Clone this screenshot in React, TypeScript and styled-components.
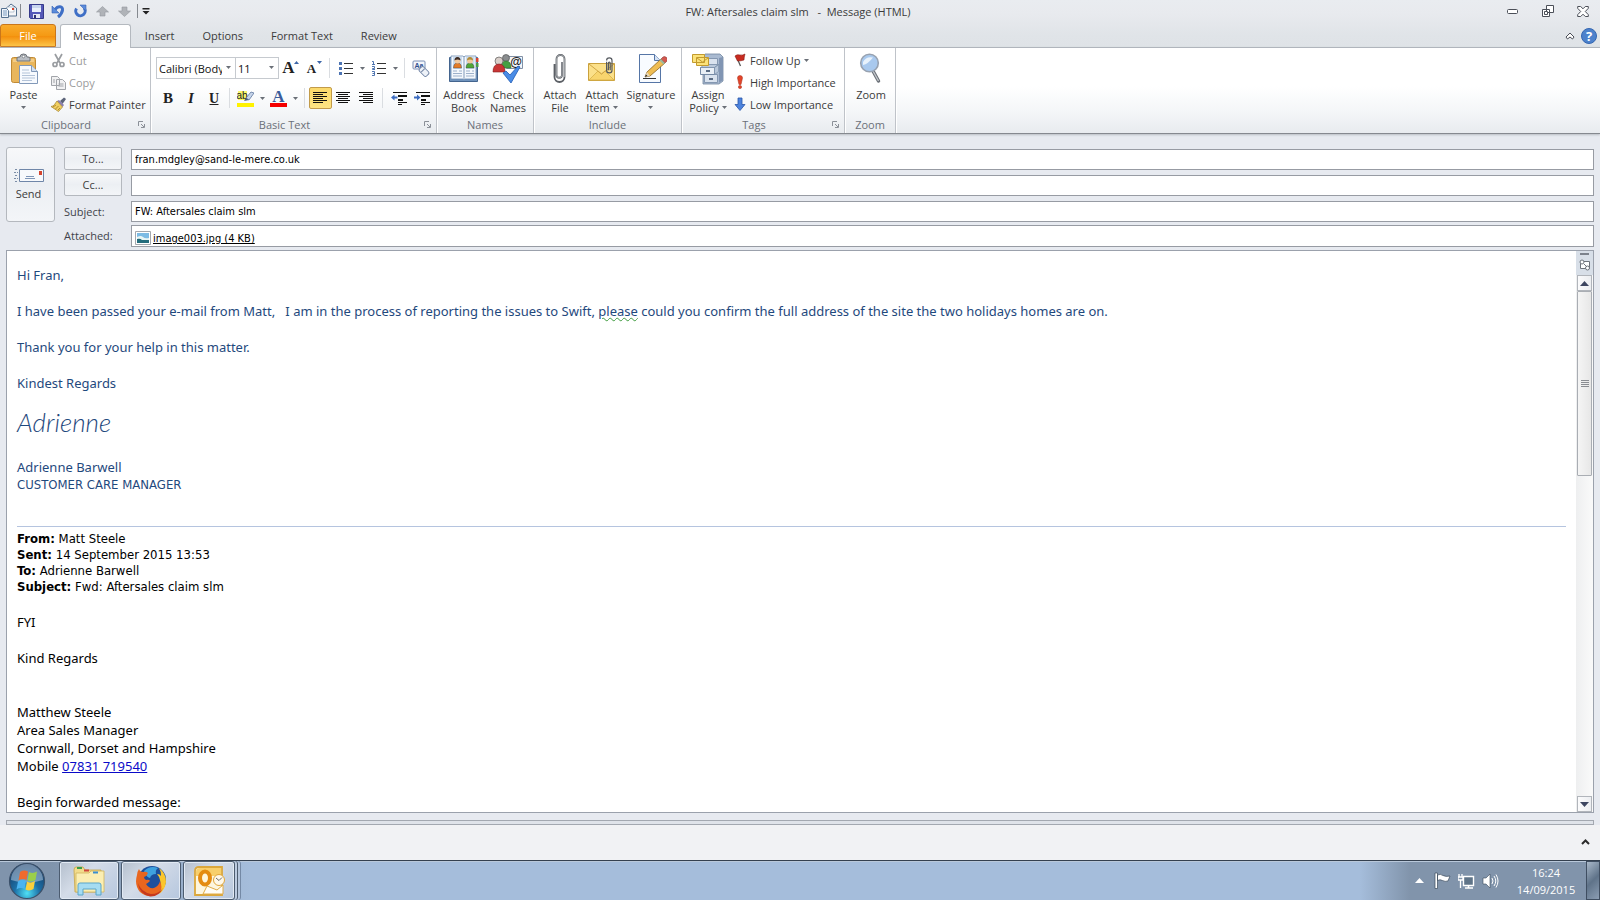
import React from 'react';
import styled, { createGlobalStyle, css } from 'styled-components';

const ui = '"Open Sans", "Noto Sans", sans-serif';
const dialog = '"DejaVu Sans Condensed", "Liberation Sans", sans-serif';

const GlobalStyle = createGlobalStyle`
  *, *::before, *::after { box-sizing: border-box; }
  body { margin: 0; background: #e7eaf0; font: 11px/13px ${ui}; color: #3b3b3b; }
  button, input, select { font: inherit; color: inherit; }
  svg { display: block; flex: none; }
  p { margin: 0; }
`;

const Window = styled.div`
  display: flex;
  flex-direction: column;
  min-height: 100vh;
`;

/* ---------- title bar ---------- */
const Chrome = styled.header`
  background: linear-gradient(#e9ecf0, #e8eaee 30%, #e0e4e8 75%, #dfe3e7);
`;
const TitleBar = styled.div`
  display: grid;
  grid-template-columns: 1fr auto 1fr;
  align-items: center;
  height: 24px;
  padding-bottom: 2px;
`;
const QuickAccess = styled.div`
  display: flex;
  align-items: center;
`;
const BareButton = styled.button`
  display: flex;
  align-items: center;
  justify-content: center;
  padding: 0;
  border: 0;
  background: none;
`;
const QuickButton = styled(BareButton)`
  width: 22px;
  height: 22px;
`;
const QuickDivider = styled.span<{ $gap: number }>`
  width: 1px;
  height: 14px;
  margin: 0 ${p => p.$gap}px 0 2px;
  background: #85898f;
`;
const Title = styled.h1`
  margin: 0;
  padding-right: 4px;
  font-size: 11px;
  font-weight: 400;
  white-space: pre;
`;
const WindowControls = styled.div`
  display: flex;
  justify-content: flex-end;
`;
const ControlButton = styled(BareButton)`
  width: 35px;
  height: 22px;
`;

/* ---------- tabs ---------- */
const TabRow = styled.nav`
  display: flex;
  height: 23px;
`;
const Tab = styled.button<{ $active?: boolean }>`
  height: 24px;
  padding: 0 13px 2px;
  border: 1px solid transparent;
  border-bottom: 0;
  border-radius: 3px 3px 0 0;
  background: none;
  white-space: nowrap;
  ${p => p.$active && css`
    position: relative;
    padding: 0 12px 2px;
    border-color: #b4b9bf;
    background: #fff;
  `}
`;
const FileTab = styled(Tab)`
  width: 56px;
  height: 23px;
  padding: 0;
  margin-right: 4px;
  border: 1px solid #c9761b;
  background: linear-gradient(#f9ab2c, #f59a14 50%, #f38d0a 52%, #fcc447);
  color: #fff;
`;
const TabTools = styled.div`
  display: flex;
  align-items: center;
  gap: 6px;
  margin-left: auto;
  padding-right: 3px;
`;

/* ---------- ribbon ---------- */
const Ribbon = styled.div`
  display: flex;
  height: 87px;
  border-top: 1px solid #b0b5bc;
  border-bottom: 1px solid #85898f;
  background: linear-gradient(#fff, #fff 45%, #f4f6f8 75%, #e8ebef);
  box-shadow: 0 1px 2px #b9bdc4;
`;
const Group = styled.section<{ $width: number }>`
  display: flex;
  flex-direction: column;
  flex: none;
  width: ${p => p.$width}px;
  border-right: 1px solid #bfc3c9;
  box-shadow: 1px 0 #fff;
`;
const GroupBody = styled.div<{ $inset: number }>`
  display: flex;
  flex: 1;
  padding-left: ${p => p.$inset}px;
`;
const GroupFooter = styled.div`
  display: flex;
  align-items: center;
  height: 17px;
  color: #6b7079;
  text-align: center;
`;
const GroupName = styled.h2`
  flex: 1;
  margin: 0;
  font-size: 11px;
  font-weight: 400;
`;
const LauncherButton = styled(BareButton)`
  width: 18px;
`;
const LargeButton = styled.button<{ $width: number }>`
  display: flex;
  flex-direction: column;
  align-items: center;
  flex: none;
  width: ${p => p.$width}px;
  padding: 5px 0 0;
  border: 0;
  background: none;
  white-space: nowrap;
`;
const LargeLabel = styled.span`
  margin-top: 3px;
`;
const LabelLine = styled.span`
  display: flex;
  align-items: center;
  justify-content: center;
  gap: 3px;
  height: 13px;
`;
const SmallColumn = styled.div`
  display: flex;
  flex-direction: column;
  padding: 2px 0 0 4px;
`;
const SmallButton = styled.button`
  display: flex;
  align-items: center;
  gap: 3px;
  height: 22px;
  padding: 0 0 2px;
  border: 0;
  background: none;
  white-space: nowrap;
  &:disabled { color: #9b9b9b; }
`;
const ToolRows = styled.div`
  display: flex;
  flex-direction: column;
  gap: 8px;
  padding-top: 9px;
`;
const ToolRow = styled.div`
  display: flex;
  align-items: center;
  height: 22px;
`;
const ToolButton = styled.button<{ $on?: boolean }>`
  display: flex;
  align-items: center;
  justify-content: center;
  width: 23px;
  height: 22px;
  padding: 0;
  border: 1px solid ${p => (p.$on ? '#c29b4a' : 'transparent')};
  border-radius: 2px;
  background: ${p => (p.$on ? 'linear-gradient(#fbd96b, #fde383)' : 'none')};
`;
const DropButton = styled(BareButton)`
  width: 10px;
  height: 22px;
`;
const ToolDivider = styled.span`
  width: 1px;
  height: 20px;
  margin: 0 4px;
  background: #dadde1;
`;
const Combo = styled.span<{ $width: number }>`
  position: relative;
  width: ${p => p.$width}px;
  height: 22px;
  border: 1px solid #c6cacf;
  background: #fff;
  & + & { border-left: 0; }
  > svg { position: absolute; right: 4px; top: 8px; pointer-events: none; }
`;
const ComboSelect = styled.select`
  appearance: none;
  width: calc(100% - 13px);
  height: 20px;
  padding: 0 0 0 2px;
  border: 0;
  background: none;
  color: #111;
  overflow: hidden;
  text-overflow: clip;
`;

/* ---------- message header ---------- */
const Envelope = styled.form`
  display: grid;
  grid-template-columns: 49px 1fr;
  gap: 9px;
  padding: 13px 6px 3px;
`;
const SendButton = styled.button`
  display: flex;
  flex-direction: column;
  align-items: center;
  justify-content: center;
  gap: 4px;
  height: 75px;
  padding: 0 4px 2px 0;
  border: 1px solid #b4b8be;
  border-radius: 3px;
  background: linear-gradient(#f7f8fa, #eceff3 50%, #f3f5f8);
`;
const Fields = styled.div`
  display: grid;
  grid-template-columns: 58px 1fr;
  grid-template-rows: 26px 26px 26px 22px;
  column-gap: 9px;
  align-items: start;
`;
const AddressButton = styled.button`
  height: 23px;
  border: 1px solid #b4b8be;
  border-radius: 2px;
  background: linear-gradient(#f7f8fa, #eceff3 50%, #f3f5f8);
`;
const FieldLabel = styled.label`
  align-self: center;
  padding-bottom: 2px;
  color: #3f434a;
`;
const boxed = css`
  width: 100%;
  border: 1px solid #979ba3;
  background: #fff;
  font-family: ${dialog};
  color: #000;
`;
const Field = styled.input`
  ${boxed}
  height: 21px;
  margin-top: 2px;
  padding: 0 3px;
`;
const AttachmentBox = styled.div`
  ${boxed}
  display: flex;
  align-items: flex-end;
  gap: 2px;
  height: 22px;
  padding: 0 3px 1px;
`;
const AttachmentLink = styled.a`
  color: #000;
`;

/* ---------- message body ---------- */
const Reading = styled.main`
  display: flex;
  flex: 1;
  margin: 0 6px;
  border: 1px solid #9ba1ac;
  background: #fff;
`;
const Letter = styled.article`
  flex: 1;
  padding: 15px 10px 0;
  font: 13px/18px "Noto Sans", sans-serif;
  color: #000;
`;
const Reply = styled.div`
  color: #1f497d;
`;
const Paragraph = styled.p`
  min-height: 18px;
  margin-bottom: 18px;
  white-space: pre-wrap;
`;
const Flagged = styled.span`
  text-decoration: underline wavy #3f9b3f 1px;
  text-underline-offset: 1px;
`;
const Signature = styled.p`
  margin-bottom: 24px;
  font: italic 300 26px/24px Lato, cursive;
`;
const JobTitle = styled.p`
  font: 13px/17px ${dialog};
`;
const Separator = styled.hr`
  height: 1px;
  margin: 33px 0 4px;
  border: 0;
  background: #b5c4df;
`;
const Origin = styled.div`
  margin-bottom: 18px;
  font: 13px/16px ${dialog};
`;
const ContactCard = styled.address`
  margin: 36px 0 18px;
  font-style: normal;
`;
const PhoneLink = styled.a`
  color: #0a0ac8;
`;
const ScrollRail = styled.div`
  display: flex;
  flex-direction: column;
  align-items: center;
  width: 17px;
  background: linear-gradient(90deg, #eeeff0, #fafafa);
`;
const SplitHandle = styled.div`
  display: flex;
  flex-direction: column;
  align-items: center;
  gap: 4px;
  width: 100%;
  height: 24px;
  padding-top: 2px;
  background: #d8dfe8;
`;
const ScrollButton = styled(BareButton)`
  width: 15px;
  height: 16px;
  border: 1px solid #b1b5bb;
  background: linear-gradient(90deg, #fbfbfc, #eceef1);
`;
const Thumb = styled.div`
  display: flex;
  align-items: center;
  justify-content: center;
  width: 15px;
  height: 185px;
  margin-bottom: auto;
  border: 1px solid #a9adb3;
  border-radius: 1px;
  background: linear-gradient(90deg, #f5f5f5, #e7e7e7);
`;
const Splitter = styled.div`
  height: 5px;
  margin: 7px 6px 0;
  border: 1px solid #a3a8b0;
  background: #dfe3e9;
`;
const PeoplePane = styled.footer`
  display: flex;
  align-items: center;
  justify-content: flex-end;
  height: 35px;
  padding: 0 4px 2px 0;
  background: #f1f2f4;
`;

/* ---------- taskbar ---------- */
const Taskbar = styled.nav`
  display: flex;
  height: 40px;
  border-top: 1px solid #34404f;
  background: linear-gradient(90deg, #8094ac 50px, #a5bddb 250px, #a5bddb calc(100% - 240px), #8194ab calc(100% - 190px));
  box-shadow: inset 0 1px #b9c8da;
`;
const StartButton = styled(BareButton)`
  width: 54px;
  margin-right: 5px;
`;
const TaskButton = styled.button<{ $stacked?: boolean }>`
  display: flex;
  align-items: center;
  justify-content: center;
  width: ${p => (p.$stacked ? 52 : 60)}px;
  margin-right: 2px;
  padding: 0;
  border: 1px solid #4c5c70;
  border-radius: 3px;
  background: linear-gradient(135deg, #b4bfcd, #d4dce8 40%, #b6c7de);
  box-shadow: inset 0 0 0 1px #e2eaf4${p => (p.$stacked ? ', 2px 0 #bccbe0, 3px 0 #4c5c70, 5px 0 #b5c6dd, 6px 0 #7489a5' : '')};
`;
const Tray = styled.div`
  display: flex;
  align-items: center;
  gap: 7px;
  margin-left: auto;
`;
const HiddenIconsButton = styled(BareButton)`
  width: 16px;
  height: 22px;
`;
const Clock = styled.time`
  width: 80px;
  color: #fff;
  line-height: 17px;
  text-align: center;
`;
const ShowDesktop = styled.button`
  align-self: stretch;
  width: 14px;
  margin-left: -7px;
  padding: 0;
  border: 1px solid #3f4e61;
  background: linear-gradient(135deg, #a9b8c9, #5f7389 50%, #8b9db3);
`;

/* ---------- drawings ---------- */
const Caret = ({ color = '#6a6f77' }: { color?: string }) => (
  <svg width="5" height="3" viewBox="0 0 5 3"><path d="M0 0h5L2.500 3z" fill={color} /></svg>
);
const Launcher = () => (
  <svg width="7" height="7" viewBox="0 0 7 7" fill="none" stroke="#8b9098">
    <path d="M.5 5V.5H5M3 3l3 3M6.500 3v3.500H3" />
  </svg>
);
const MailIcon = () => (
  <svg width="18" height="18" viewBox="0 0 18 18">
    <path d="M5.500 7 11 2l5.500 4v8h-11z" fill="#f4f6f9" stroke="#54708f" />
    <path d="M7 5h7v5H7z" fill="#fff" stroke="#9fb0c2" strokeWidth=".7" />
    <path d="M12 6h2v2h-2z" fill="#d3452f" />
    <path d="M1.500 6.500h5l2 2v7h-7z" fill="#eef4fb" stroke="#54708f" />
    <path d="M3 9h4M3 11h4M3 13h4" stroke="#7c9cc0" />
  </svg>
);
const SaveIcon = () => (
  <svg width="15" height="15" viewBox="0 0 15 15">
    <path d="M.5.5h14v14h-13l-1-1z" fill="#5559b8" stroke="#363a8a" />
    <path d="M3 1h9v7H3z" fill="#eaf0fb" /><path d="M3 1h9v3H3z" fill="#c9d6ef" />
    <path d="M4 10h7v4H4z" fill="#e7e9f3" /><path d="M5 11h2v3H5z" fill="#2e3170" />
  </svg>
);
const UndoIcon = () => (
  <svg width="15" height="15" viewBox="0 0 15 15">
    <path d="M4 5.500c3-4 8-3.500 7.500.5-.3 3-2 5-4.500 7" fill="none" stroke="#3f6fc6" strokeWidth="3" />
    <path d="M1 2v7h7z" fill="#5b8bdb" stroke="#3763b5" strokeWidth=".6" />
  </svg>
);
const RedoIcon = () => (
  <svg width="15" height="15" viewBox="0 0 15 15">
    <path d="M3.500 4.500a4.700 4.700 0 1 0 7.500-.5" fill="none" stroke="#3f6fc6" strokeWidth="3" />
    <path d="M7 1h6v6z" fill="#5b8bdb" stroke="#3763b5" strokeWidth=".6" />
  </svg>
);
const StepIcon = ({ down }: { down?: boolean }) => (
  <svg width="13" height="11" viewBox="0 0 13 11">
    <path d={down ? 'M4 1h5v4h3.500L6.500 10.500.5 5H4z' : 'M4 10h5V6h3.500L6.500.5.5 6H4z'} fill="#b0b3b8" stroke="#94989e" strokeWidth=".6" />
  </svg>
);
const CustomizeIcon = () => (
  <svg width="8" height="7" viewBox="0 0 8 7"><path d="M.5 0h7v1.500h-7zM.5 3h7L4 6.500z" fill="#222" /></svg>
);
const PasteIcon = () => (
  <svg width="32" height="32" viewBox="0 0 32 32">
    <rect x="3.500" y="4.500" width="24" height="25" rx="2" fill="#e9b65c" stroke="#c08a36" />
    <path d="M5 6h21v3H5z" fill="#f3cc86" />
    <path d="M9 8V5q0-1 2-1h1q0-3 3.500-3T19 4h1q2 0 2 1v3z" fill="#b9bdc3" stroke="#6d7278" />
    <circle cx="15.500" cy="3.500" r="1.300" fill="#fff" stroke="#6d7278" strokeWidth=".7" />
    <path d="M11.500 12.500h12l6 6v12h-18z" fill="#f7fafe" stroke="#8198b8" />
    <path d="M23.500 12.500v6h6" fill="#d4e1f2" stroke="#8198b8" />
    <path d="M14 17h7M14 20h8M14 22.500h13M14 25h13M14 27.500h10" stroke="#b3c3d8" />
  </svg>
);
const CutIcon = () => (
  <svg width="15" height="15" viewBox="0 0 15 15" fill="none" stroke="#9a9da1" strokeWidth="1.700">
    <path d="m4 1 5 9M11 1 6 10" /><circle cx="4" cy="11.500" r="2" /><circle cx="11" cy="11.500" r="2" />
  </svg>
);
const CopyIcon = () => (
  <svg width="15" height="15" viewBox="0 0 15 15" fill="#f1f1f2" stroke="#a1a4a9">
    <path d="M.5 1.500h6l2 2v7h-8zM5.500 4.500h6l3 3v7h-9z" />
    <path d="M2 5h2M2 7h2M7.500 9h5M7.500 11h5" />
  </svg>
);
const BrushIcon = () => (
  <svg width="15" height="15" viewBox="0 0 15 15">
    <path d="m9 4 4-3.500L15 2l-3.500 5z" fill="#5b6378" />
    <path d="m6 4 2-1 5 5-1.500 2z" fill="#8a7fb0" />
    <path d="m6 4 5.500 6-4 4.500L0 9.500c3 0 4-3 6-5.500z" fill="#f0cf62" stroke="#a98a35" strokeWidth=".8" />
    <path d="m2 10 3-2M4.500 12l3-3M7 13l2-2" stroke="#b38b2b" />
  </svg>
);
const Letterform = ({ text, size, style, hat, under }: { text: string; size: number; style?: string; hat?: string; under?: boolean }) => (
  <svg width="19" height="18" viewBox="0 0 19 18">
    <text x={hat ? 7.5 : 10} y="14" textAnchor="middle" fontFamily="Liberation Serif, serif" fontSize={size} fontWeight="700" fontStyle={style} fill="#222">{text}</text>
    {hat && <path d={hat} fill="#3c66a8" />}
    {under && <path d="M5.500 15.500h9" stroke="#222" />}
  </svg>
);
const ListIcon = ({ numbered }: { numbered?: boolean }) => (
  <svg width="15" height="15" viewBox="0 0 15 15">
    <path d="M6 2.500h9M6 7.500h9M6 12.500h9" stroke="#333" />
    {numbered
      ? <path d="M1 .5h1.500v3M1 3.500h3M1 5.500h2.500v2H1.500v1H4M1 10.500h2.500v4H1M1.500 12.500h2" stroke="#3c66a8" strokeWidth=".9" fill="none" />
      : <path d="M1 1h3v3H1zM1 6h3v3H1zM1 11h3v3H1z" fill="#4c73b3" />}
  </svg>
);
const ClearFormatIcon = () => (
  <svg width="18" height="17" viewBox="0 0 18 17">
    <rect x="1" y="1" width="12" height="8" rx="1" fill="#f3f6fb" stroke="#7a8fb5" />
    <text x="7" y="8" textAnchor="middle" fontFamily="Liberation Sans, sans-serif" fontSize="7" fontWeight="700" fill="#2d4f8f">Aa</text>
    <g transform="rotate(45 12 11.500)">
      <rect x="7" y="8.500" width="10" height="6" rx="2" fill="#eef2f8" stroke="#7486a6" />
      <path d="M10.500 9v5" stroke="#7486a6" />
    </g>
  </svg>
);
const HighlightIcon = () => (
  <svg width="17" height="17" viewBox="0 0 17 17">
    <path d="M1 1h9v9H1z" fill="#fbf66a" />
    <text x="5" y="9" textAnchor="middle" fontFamily="Liberation Sans, sans-serif" fontSize="10" fill="#222">ab</text>
    <path d="m9 8 5-6 3 1-5 7z" fill="#c7d5ea" stroke="#5e779f" strokeWidth=".8" /><path d="m7 11 2-3 3 2z" fill="#4a5d7c" />
    <path d="M0 13h17v4H0z" fill="#fff200" />
  </svg>
);
const FontColorIcon = () => (
  <svg width="17" height="17" viewBox="0 0 17 17">
    <text x="8.500" y="12" textAnchor="middle" fontFamily="Liberation Serif, serif" fontSize="17" fontWeight="700" fill="#3b5c9b">A</text>
    <path d="M0 13h17v4H0z" fill="#f50000" />
  </svg>
);
const AlignIcon = ({ kind }: { kind: 'left' | 'center' | 'right' }) => {
  const x = { left: 0, center: 2, right: 4 }[kind];
  return (
    <svg width="15" height="12" viewBox="0 0 15 12" stroke="#111" shapeRendering="crispEdges">
      <path d={`M0 .5h14M${x} 2.500h10M0 4.500h14M${x} 6.500h10M0 8.500h14M${x} 10.500h10`} />
    </svg>
  );
};
const IndentIcon = ({ right }: { right?: boolean }) => (
  <svg width="16" height="13" viewBox="0 0 16 13">
    <path d="M2 .5h14M7 10.500h9M7 12.500h4" stroke="#111" shapeRendering="crispEdges" />
    <path d="M7 3.500h9M7 7.500h5" stroke="#111" strokeWidth="2" shapeRendering="crispEdges" />
    <path d={right ? 'M6.500 5.500 3 2.500v2H0v2h3v2z' : 'M0 5.500l3.500-3v2h3v2h-3v2z'} fill="#3c6cc0" />
  </svg>
);
const Person = ({ x, y, hair, coat }: { x: number; y: number; hair: string; coat: string }) => (
  <g transform={`translate(${x} ${y})`}>
    <path d="M-4 10q0-5 4-5t4 5z" fill={coat} stroke="#333" strokeWidth=".4" />
    <circle r="3" cy="2.500" fill="#f0c9a0" /><path d="M-3 2.500a3 3.500 0 0 1 6 0q-3-2-6 0z" fill={hair} />
  </g>
);
const AddressBookIcon = () => (
  <svg width="32" height="32" viewBox="0 0 32 32">
    <path d="M1.500 4.500h28v24h-28z" fill="#6f93bd" stroke="#43648e" />
    <path d="M3 3h12l1 1 1-1h11v23H17l-1 1-1-1H3z" fill="#f4f8fd" stroke="#6d8bb0" strokeWidth=".8" />
    <path d="M5 4h9v12H5zM18 4h8.500v12H18z" fill="#c9dcf0" />
    <path d="M16 4v23" stroke="#8099b8" /><path d="M28 5h2.500v4H28z" fill="#d84532" /><path d="M28 10h2.500v4H28z" fill="#4c9c48" />
    <Person x={9.5} y={5} hair="#3b2a22" coat="#e47b26" /><Person x={22} y={5} hair="#b08b35" coat="#4fa637" />
    <path d="M5 18h4M11 18h3M5 20.500h9M5 23h9M18 18h4M24 18h2M18 20.500h8M18 23h8" stroke="#9db1cb" />
  </svg>
);
const CheckNamesIcon = () => (
  <svg width="32" height="32" viewBox="0 0 32 32">
    <path d="M14.500 3.500h16v12h-16z" fill="#f4f6fa" stroke="#8190a5" />
    <circle cx="14" cy="5" r="3.500" fill="#8a8d8f" stroke="#444" strokeWidth=".6" /><path d="M9 15q0-7 5-7t5 7z" fill="#45a043" stroke="#2b6f2b" strokeWidth=".6" />
    <circle cx="7" cy="8" r="4" fill="#d9cfca" stroke="#444" strokeWidth=".6" /><path d="M1 19q0-8 6-8t6 8z" fill="#c93535" stroke="#852020" strokeWidth=".6" />
    <text x="24" y="13" textAnchor="middle" fontFamily="Liberation Sans, sans-serif" fontSize="12" fontWeight="700" fill="#222">@</text>
    <path d="m11 20 3-2 4 4 8-9 2 1-9 16z" fill="#4a8ce6" stroke="#1f5bb5" strokeWidth=".8" />
  </svg>
);
const ClipPath = 'M11 8v14a4 4 0 0 0 9 0V6a4.500 4.500 0 0 0-9 0M14 22V10a1.500 1.500 0 0 1 3 0v12';
const ClipIcon = () => (
  <svg width="32" height="32" viewBox="0 0 32 32" fill="none">
    <g transform="translate(-1 -1)">
      <path d="M19 10v13a2.500 2.500 0 0 1-5.500 0V7a4 4 0 0 1 8 0v18a5 5 0 0 1-10 0V12" stroke="#5b5f65" strokeWidth="1.800" />
      <path d="M19 10v13a2.500 2.500 0 0 1-5.500 0V7a4 4 0 0 1 8 0v18" stroke="#d7dadd" strokeWidth=".5" />
    </g>
  </svg>
);
const AttachItemIcon = () => (
  <svg width="32" height="32" viewBox="0 0 32 32">
    <path d="M2.500 10.500h26v17h-26z" fill="#fbe08a" stroke="#caa13d" />
    <path d="m3 27 9-9 3.500 3 3.500-3 9 9z" fill="#f8d56e" stroke="#d8b149" strokeWidth=".8" /><path d="M3 11l12.500 10L28 11" fill="none" stroke="#d0a544" />
    <g transform="translate(14 4) scale(.6)" fill="none" stroke="#55595f" strokeWidth="2"><path d={ClipPath} /></g>
  </svg>
);
const SignatureIcon = () => (
  <svg width="32" height="32" viewBox="0 0 32 32">
    <path d="M4.500 1.500h15l6 6v22h-21z" fill="#f8fbff" stroke="#5575a6" /><path d="M19.500 1.500v6h6" fill="#d5e2f4" stroke="#5575a6" />
    <path d="M8 25.500h13" stroke="#333" />
    <path d="m10 24 2-5L26 6l4 4-15 13z" fill="#efbd53" stroke="#8d6420" strokeWidth=".8" />
    <path d="m26 6 2-2q1.500-1 3.500.5t.5 3.500l-2 2z" fill="#d25850" stroke="#8d3a35" strokeWidth=".6" /><path d="m24.500 7.500 4 4 1.500-1.500-4-4z" fill="#9eb79e" />
    <path d="m10 24 2-5 3 4z" fill="#e9d9b9" /><path d="m10 24 1-2.500 1.500 1.500z" fill="#222" />
  </svg>
);
const PolicyIcon = () => (
  <svg width="32" height="32" viewBox="0 0 32 32">
    <path d="M13 1h15l3 3v24l-4 3H11V4z" fill="#a9bad1" stroke="#71869f" strokeWidth=".8" />
    <path d="M27 5v25l4-3V4z" fill="#8195b3" />
    <path d="M12.500 5.500h13v6h-13zM12.500 21.500h13v8h-13z" fill="#d9e2ee" stroke="#8497b1" />
    <path d="M8.500 14.500h14v7h-14z" fill="#e9eff6" stroke="#7489a5" /><path d="m8.500 14.500 4-3h14l-4 3zM22.500 21.500l4-3v-7l-4 3z" fill="#b9c8db" stroke="#7489a5" strokeWidth=".6" />
    <path d="M14 18h4M17 26h4" stroke="#5b6d85" strokeWidth="2" />
    <path d="M.5 1.500h12v8H.5zM4.500 4.500h12v8h-12z" fill="#fbe27a" stroke="#c29a2e" /><path d="m5 5 5.500 4L16 5" fill="none" stroke="#c29a2e" />
  </svg>
);
const ZoomIcon = () => (
  <svg width="32" height="32" viewBox="0 0 32 32">
    <path d="m18 18 5.500 10" stroke="#6b7077" strokeWidth="3.500" strokeLinecap="round" /><path d="m18 18 5.500 10" stroke="#c5c9ce" strokeWidth="1.300" />
    <circle cx="14.500" cy="10" r="8.800" fill="#a9c9ee" stroke="#98a2b0" strokeWidth="1.600" />
    <path d="M8 9q3-6 10-4.500Q13 11 8 12z" fill="#e8f2fc" />
  </svg>
);
const FlagIcon = () => (
  <svg width="14" height="14" viewBox="0 0 14 14"><path d="m4 5 3.500 8" stroke="#555" strokeWidth="1.300" /><path d="M2 3q2-2 5-1 3 .5 5-1-1 3-1 6Q8 8 4.500 8z" fill="#c82b20" stroke="#8a1b14" strokeWidth=".6" /></svg>
);
const HighIcon = () => (
  <svg width="14" height="14" viewBox="0 0 14 14" fill="#e2452a" stroke="#a82a17" strokeWidth=".5"><path d="M4.500 3q0-2.500 2.500-2.500T9.500 3L8 9.500H6z" /><circle cx="7" cy="12" r="1.600" /></svg>
);
const LowIcon = () => (
  <svg width="14" height="14" viewBox="0 0 14 14"><path d="M5 1h4v6.500h3L7 13.500l-5-6h3z" fill="#4d83dd" stroke="#2a56a8" strokeWidth=".8" /></svg>
);
const SendIcon = () => (
  <svg width="30" height="15" viewBox="0 0 30 15">
    <path d="M1 1.500h3M0 4.500h4M1 7.500h3M0 10.500h4M1 13.500h3" stroke="#7b8da6" strokeDasharray="2 1" />
    <path d="M5.500 1.500h24v12h-24z" fill="#f7f9fc" stroke="#6f86a8" /><path d="M25 3h3v4h-3z" fill="#d3452f" /><path d="M12 8.500h8M11 10.500h10" stroke="#7f96b8" />
  </svg>
);
const PictureIcon = () => (
  <svg width="16" height="14" viewBox="0 0 16 14">
    <path d="M.5.5h15v13H.5z" fill="#fff" stroke="#a3a7ad" /><path d="M2 2h12v10H2z" fill="#7cbbe4" />
    <path d="M2 6q4-2 6 0t6 1v2H2z" fill="#e8f5f4" /><path d="M2 8q3-1 5 1l7 0v3H2z" fill="#236c7c" />
  </svg>
);
const SplitIcon = () => (
  <svg width="12" height="12" viewBox="0 0 12 12" fill="#fff" stroke="#6e737b">
    <path d="M1.500 2.500h9v7h-9z" /><circle cx="3" cy="3" r="2" /><circle cx="8.500" cy="9" r="2" /><path d="m5 5 3 3" />
  </svg>
);
const Orb = () => (
  <svg width="38" height="38" viewBox="0 0 38 38">
    <defs>
      <radialGradient id="orb" cx=".5" cy=".85" r=".8"><stop offset="0" stopColor="#4fe0f5" /><stop offset=".45" stopColor="#1c6fa6" /><stop offset="1" stopColor="#173a63" /></radialGradient>
    </defs>
    <circle cx="19" cy="19" r="17.500" fill="url(#orb)" stroke="#3b5069" strokeWidth="1.200" />
    <path d="M3 18a16 16 0 0 1 32 0q-16 5-32 0z" fill="#b7c9dc" opacity=".55" />
    <path d="M12 10q4-2.500 8-.5L18.500 18q-4-2-8 .5z" fill="#ef6b2e" /><path d="M21 10q4 2 8-.5L27.500 18q-4 2.500-8 .5z" fill="#9bcf4a" />
    <path d="M10 19.500q4-2.500 8-.5l-1.500 8q-4-2-8 .5z" fill="#4bb4f0" /><path d="M19 19.500q4 2 8-.5l-1.500 8q-4 2.500-8 .5z" fill="#fbd03d" />
  </svg>
);
const ExplorerIcon = () => (
  <svg width="32" height="30" viewBox="0 0 32 30">
    <path d="M1 4q0-3 2-3h7l2 3h16v22H2z" fill="#f2dc8c" stroke="#c5a548" strokeWidth=".8" />
    <path d="M4 2h5" stroke="#3a9d4a" strokeWidth="2" /><path d="M3 7h13l2-2h13v21H3z" fill="#fbeeb2" stroke="#d0b45e" strokeWidth=".8" />
    <path d="M11 4.500h5" stroke="#d0483a" strokeWidth="2" /><path d="M20 6.500h5" stroke="#3a8fd0" strokeWidth="2" />
    <path d="M5 29V19q0-2 2-2h19q2 0 2 2v10h-5v-6H10v6z" fill="#a5dcf2" stroke="#5aa5c9" />
  </svg>
);
const FirefoxIcon = () => (
  <svg width="32" height="32" viewBox="0 0 32 32">
    <circle cx="17" cy="15" r="14" fill="#1c4f9c" /><path d="M9 6q6-6 14-3-3 2-2 6-5 0-6 4-4-1-6-7z" fill="#3fa2df" />
    <path d="M24 3q7 5 7 14-1 8-7 12 3-7 1-14-1-4-3-6 3 0 4 2 0-5-2-8z" fill="#fbc62c" />
    <path d="M4 4q1 3 4 3 3-1 5 1-1 3-4 4 0 2 2 3 3-1 4 1-2 2-4 3 3 5 8 4 5-2 6-7 4 9-3 13-9 5-17-2-6-7-3-17 0-3 2-6z" fill="#e8661f" />
    <path d="M3 18q3 9 13 11 8 0 12-6-4 9-13 8.500Q4 29 3 18z" fill="#c5381d" />
  </svg>
);
const OutlookIcon = () => (
  <svg width="32" height="32" viewBox="0 0 32 32">
    <path d="M2 6q0-4 4-4h23v28H2z" fill="#fdf6df" stroke="#dba73b" strokeWidth="1.800" /><path d="M3 7q0-4 4-4h21v8H3z" fill="#f8cf6b" />
    <ellipse cx="12" cy="13" rx="5" ry="6.500" fill="#fff5dc" stroke="#e48b12" strokeWidth="4" />
    <path d="m10 29 4-8 10 4 6-5v9z" fill="#fffdf6" stroke="#e0ab46" />
    <circle cx="26" cy="15" r="5.500" fill="#fff8e8" stroke="#e0a63a" /><path d="m23 13 3 2.500 3-3" fill="none" stroke="#6c6c6c" />
  </svg>
);
const NotifyFlag = () => (
  <svg width="17" height="17" viewBox="0 0 17 17" fill="#fff" stroke="#3b4a5c" strokeWidth=".7"><path d="M1 1h2.500v15.500H1zM3.500 3q3-1.500 5.500.5 3 1.500 7 .5l-2 5q-3 1-5.500-.5-2.500-1.500-5 0z" /></svg>
);
const NetworkIcon = () => (
  <svg width="17" height="16" viewBox="0 0 17 16"><path d="M5.500 3.500h10v9h-10z" fill="#5f7488" stroke="#fff" strokeWidth="1.400" /><path d="M7 15h8M10.500 13v2" stroke="#fff" strokeWidth="1.500" /><path d="M1 1v3M4 1v3M0 4h5v3H0zM2.500 7v8" stroke="#fff" strokeWidth="1.300" fill="none" /></svg>
);
const VolumeIcon = () => (
  <svg width="17" height="16" viewBox="0 0 17 16"><path d="M1 5h3l4-4v14l-4-4H1z" fill="#fff" stroke="#3b4a5c" strokeWidth=".6" /><path d="M10 5q2 3 0 6M12 3q3.500 5 0 10M14 1.500q4 6.500 0 13" fill="none" stroke="#fff" /></svg>
);

/* ---------- composed parts ---------- */
interface GroupProps { name: string; width: number; inset?: number; launcher?: boolean; children: React.ReactNode }
const RibbonGroup = ({ name, width, inset = 5, launcher, children }: GroupProps) => (
  <Group $width={width} aria-label={name}>
    <GroupBody $inset={inset}>{children}</GroupBody>
    <GroupFooter>
      <GroupName>{name}</GroupName>
      {launcher && <LauncherButton type="button" aria-label={`${name} options`}><Launcher /></LauncherButton>}
    </GroupFooter>
  </Group>
);

interface BigProps { icon: React.ReactNode; lines: string[]; width: number; drop?: boolean }
const Big = ({ icon, lines, width, drop }: BigProps) => (
  <LargeButton type="button" $width={width}>
    {icon}
    <LargeLabel>
      {lines.map((line, i) => (
        <LabelLine key={i}>{line}{drop && i === lines.length - 1 && <Caret />}</LabelLine>
      ))}
    </LargeLabel>
  </LargeButton>
);

const Tool = ({ label, on, drop, children }: { label: string; on?: boolean; drop?: boolean; children: React.ReactNode }) => (
  <>
    <ToolButton type="button" aria-label={label} $on={on}>{children}</ToolButton>
    {drop && <DropButton type="button" aria-label={`${label} choices`}><Caret /></DropButton>}
  </>
);

const origin: [string, string][] = [
  ['From:', 'Matt Steele'],
  ['Sent:', '14 September 2015 13:53'],
  ['To:', 'Adrienne Barwell'],
  ['Subject:', 'Fwd: Aftersales claim slm'],
];

export default function App() {
  return (
    <Window>
      <GlobalStyle />
      <Chrome>
        <TitleBar>
          <QuickAccess>
            <MailIcon />
            <QuickDivider $gap={4} />
            <QuickButton type="button" aria-label="Save"><SaveIcon /></QuickButton>
            <QuickButton type="button" aria-label="Undo"><UndoIcon /></QuickButton>
            <QuickButton type="button" aria-label="Redo"><RedoIcon /></QuickButton>
            <QuickButton type="button" aria-label="Previous item"><StepIcon /></QuickButton>
            <QuickButton type="button" aria-label="Next item"><StepIcon down /></QuickButton>
            <QuickDivider $gap={4} />
            <BareButton type="button" aria-label="Customize toolbar"><CustomizeIcon /></BareButton>
          </QuickAccess>
          <Title>{'FW: Aftersales claim slm   -  Message (HTML)'}</Title>
          <WindowControls>
            <ControlButton type="button" aria-label="Minimize">
              <svg width="12" height="12" viewBox="0 0 12 12"><rect x=".5" y="4.500" width="10" height="4" rx="1" fill="#fff" stroke="#4b4f58" /></svg>
            </ControlButton>
            <ControlButton type="button" aria-label="Restore">
              <svg width="12" height="12" viewBox="0 0 12 12" fill="#fff" stroke="#4b4f58"><path d="M4.500.5h7v7h-7zM.5 4.500h7v7h-7z" /><path d="M2.500 6.500h3v3h-3z" /></svg>
            </ControlButton>
            <ControlButton type="button" aria-label="Close">
              <svg width="12" height="11" viewBox="0 0 12 11"><path d="M.7.5h3L6 2.800 8.300.5h3v1.800L8.300 5.500l3 3.200v1.800h-3L6 8.200l-2.300 2.300h-3V8.700l3-3.200-3-3.200z" fill="#fff" stroke="#4b4f58" /></svg>
            </ControlButton>
          </WindowControls>
        </TitleBar>
        <TabRow>
          <FileTab type="button">File</FileTab>
          <Tab type="button" $active>Message</Tab>
          <Tab type="button">Insert</Tab>
          <Tab type="button">Options</Tab>
          <Tab type="button">Format Text</Tab>
          <Tab type="button">Review</Tab>
          <TabTools>
            <BareButton type="button" aria-label="Minimize the ribbon">
              <svg width="10" height="8" viewBox="0 0 10 8"><path d="M1 5 5 1l4 4-1.500 2L5 5 2.500 7z" fill="#fff" stroke="#4b4f58" /></svg>
            </BareButton>
            <BareButton type="button" aria-label="Help">
              <svg width="16" height="16" viewBox="0 0 16 16"><circle cx="8" cy="8" r="7.500" fill="#4d82cc" stroke="#3466b1" /><text x="8" y="13" textAnchor="middle" fontFamily="Open Sans, sans-serif" fontSize="13" fontWeight="700" fill="#fff">?</text></svg>
            </BareButton>
          </TabTools>
        </TabRow>
      </Chrome>

      <Ribbon>
        <RibbonGroup name="Clipboard" width={151} inset={0} launcher>
          <Big icon={<PasteIcon />} lines={['Paste', '']} width={47} drop />
          <SmallColumn>
            <SmallButton type="button" disabled><CutIcon />Cut</SmallButton>
            <SmallButton type="button" disabled><CopyIcon />Copy</SmallButton>
            <SmallButton type="button"><BrushIcon />Format Painter</SmallButton>
          </SmallColumn>
        </RibbonGroup>
        <RibbonGroup name="Basic Text" width={286} launcher>
          <ToolRows>
            <ToolRow>
              <Combo $width={80}>
                <ComboSelect aria-label="Font"><option>Calibri (Body)</option></ComboSelect><Caret />
              </Combo>
              <Combo $width={43}>
                <ComboSelect aria-label="Font size"><option>11</option></ComboSelect><Caret />
              </Combo>
              <Tool label="Grow font"><Letterform text="A" size={17} hat="M13 5h5l-2.500-3z" /></Tool>
              <Tool label="Shrink font"><Letterform text="A" size={13} hat="M13 2h5l-2.500 3z" /></Tool>
              <ToolDivider />
              <Tool label="Bullets" drop><ListIcon /></Tool>
              <Tool label="Numbering" drop><ListIcon numbered /></Tool>
              <ToolDivider />
              <Tool label="Clear formatting"><ClearFormatIcon /></Tool>
            </ToolRow>
            <ToolRow>
              <Tool label="Bold"><Letterform text="B" size={15} /></Tool>
              <Tool label="Italic"><Letterform text="I" size={15} style="italic" /></Tool>
              <Tool label="Underline"><Letterform text="U" size={14} under /></Tool>
              <ToolDivider />
              <Tool label="Highlight" drop><HighlightIcon /></Tool>
              <Tool label="Font color" drop><FontColorIcon /></Tool>
              <ToolDivider />
              <Tool label="Align left" on><AlignIcon kind="left" /></Tool>
              <Tool label="Center"><AlignIcon kind="center" /></Tool>
              <Tool label="Align right"><AlignIcon kind="right" /></Tool>
              <ToolDivider />
              <Tool label="Decrease indent"><IndentIcon /></Tool>
              <Tool label="Increase indent"><IndentIcon right /></Tool>
            </ToolRow>
          </ToolRows>
        </RibbonGroup>
        <RibbonGroup name="Names" width={97}>
          <Big icon={<AddressBookIcon />} lines={['Address', 'Book']} width={44} />
          <Big icon={<CheckNamesIcon />} lines={['Check', 'Names']} width={44} />
        </RibbonGroup>
        <RibbonGroup name="Include" width={148}>
          <Big icon={<ClipIcon />} lines={['Attach', 'File']} width={42} />
          <Big icon={<AttachItemIcon />} lines={['Attach', 'Item']} width={42} drop />
          <Big icon={<SignatureIcon />} lines={['Signature', '']} width={56} drop />
        </RibbonGroup>
        <RibbonGroup name="Tags" width={163} launcher>
          <Big icon={<PolicyIcon />} lines={['Assign', 'Policy']} width={42} drop />
          <SmallColumn>
            <SmallButton type="button"><FlagIcon />Follow Up <Caret /></SmallButton>
            <SmallButton type="button"><HighIcon />High Importance</SmallButton>
            <SmallButton type="button"><LowIcon />Low Importance</SmallButton>
          </SmallColumn>
        </RibbonGroup>
        <RibbonGroup name="Zoom" width={51}>
          <Big icon={<ZoomIcon />} lines={['Zoom']} width={42} />
        </RibbonGroup>
      </Ribbon>

      <Envelope>
        <SendButton type="button"><SendIcon />Send</SendButton>
        <Fields>
          <AddressButton type="button">To...</AddressButton>
          <Field aria-label="To" defaultValue="fran.mdgley@sand-le-mere.co.uk" />
          <AddressButton type="button">Cc...</AddressButton>
          <Field aria-label="Cc" />
          <FieldLabel htmlFor="subject">Subject:</FieldLabel>
          <Field id="subject" defaultValue="FW: Aftersales claim slm" />
          <FieldLabel as="span">Attached:</FieldLabel>
          <AttachmentBox><PictureIcon /><AttachmentLink href="#image003">image003.jpg (4 KB)</AttachmentLink></AttachmentBox>
        </Fields>
      </Envelope>

      <Reading>
        <Letter>
          <Reply>
            <Paragraph>Hi Fran,</Paragraph>
            <Paragraph>
              {'I have been passed your e-mail from Matt,   I am in the process of reporting the issues to Swift, '}
              <Flagged>please</Flagged> could you confirm the full address of the site the two holidays homes are on.
            </Paragraph>
            <Paragraph>Thank you for your help in this matter.</Paragraph>
            <Paragraph>Kindest Regards</Paragraph>
            <Signature>Adrienne</Signature>
            <p>Adrienne Barwell</p>
            <JobTitle>CUSTOMER CARE MANAGER</JobTitle>
          </Reply>
          <Separator />
          <Origin>
            {origin.map(([name, value]) => <p key={name}><b>{name}</b> {value}</p>)}
          </Origin>
          <Paragraph>FYI</Paragraph>
          <p>Kind Regards</p>
          <ContactCard>
            Matthew Steele<br />
            Area Sales Manager<br />
            Cornwall, Dorset and Hampshire<br />
            Mobile <PhoneLink href="tel:07831719540">07831 719540</PhoneLink>
          </ContactCard>
          <p>Begin forwarded message:</p>
        </Letter>
        <ScrollRail>
          <SplitHandle>
            <svg width="9" height="2" viewBox="0 0 9 2"><path d="M0 0h9v2H0z" fill="#7c828c" /></svg>
            <SplitIcon />
          </SplitHandle>
          <ScrollButton type="button" aria-label="Scroll up"><svg width="9" height="5" viewBox="0 0 9 5"><path d="M0 5h9L4.500 0z" fill="#3d4660" /></svg></ScrollButton>
          <Thumb><svg width="8" height="7" viewBox="0 0 8 7"><path d="M0 .5h8M0 2.500h8M0 4.500h8M0 6.500h8" stroke="#8a8d92" /></svg></Thumb>
          <ScrollButton type="button" aria-label="Scroll down"><svg width="9" height="5" viewBox="0 0 9 5"><path d="M0 0h9L4.500 5z" fill="#3d4660" /></svg></ScrollButton>
        </ScrollRail>
      </Reading>
      <Splitter />
      <PeoplePane>
        <QuickButton type="button" aria-label="Expand people pane">
          <svg width="9" height="6" viewBox="0 0 9 6"><path d="m1 5 3.500-3.500L8 5" fill="none" stroke="#2b2b2b" strokeWidth="2" /></svg>
        </QuickButton>
      </PeoplePane>

      <Taskbar>
        <StartButton type="button" aria-label="Start"><Orb /></StartButton>
        <TaskButton type="button" aria-label="File explorer"><ExplorerIcon /></TaskButton>
        <TaskButton type="button" aria-label="Firefox"><FirefoxIcon /></TaskButton>
        <TaskButton type="button" aria-label="Outlook" $stacked><OutlookIcon /></TaskButton>
        <Tray>
          <HiddenIconsButton type="button" aria-label="Show hidden icons"><svg width="9" height="5" viewBox="0 0 9 5"><path d="M0 5h9L4.500 0z" fill="#fff" /></svg></HiddenIconsButton>
          <NotifyFlag /><NetworkIcon /><VolumeIcon />
          <Clock>16:24<br />14/09/2015</Clock>
          <ShowDesktop type="button" aria-label="Show desktop" />
        </Tray>
      </Taskbar>
    </Window>
  );
}
